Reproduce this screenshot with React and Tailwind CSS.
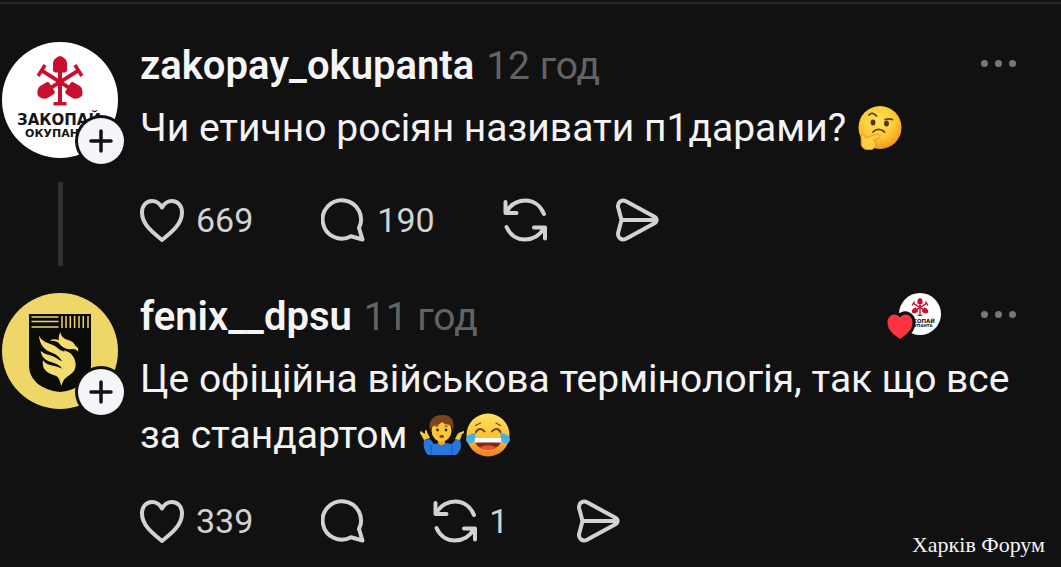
import React from 'react';
import clsx from 'clsx';

const posts = [
  {
    id: 1,
    author: 'zakopay_okupanta',
    time: '12 год',
    lines: ['Чи етично росіян називати п1дарами?'],
    emojis: ['thinking'],
    likes: 669,
    replies: 190,
    hasThread: true,
  },
  {
    id: 2,
    author: 'fenix__dpsu',
    time: '11 год',
    lines: ['Це офіційна військова термінологія, так що все', 'за стандартом'],
    emojis: ['shrug', 'joy'],
    likes: 339,
    reposts: 1,
    likedByAuthor: true,
  },
];

const Shovel = ({ angle }) => (
  <g transform={`rotate(${angle} 58 40)`} fill="#c8102e">
    <path d="M58 14c-4.500 1.500-7 4-7 8v6c0 1.500 1 2.500 2.500 2.500h9c1.500 0 2.500-1 2.500-2.500v-6c0-4-2.500-6.500-7-8z" />
    <path d="M56 29h4v32h-4z" />
    <path d="M51.500 60h13v3.500h-13z" />
  </g>
);

const ShovelLogo = ({ className }) => (
  <svg viewBox="0 0 116 116" className={className} role="img" aria-label="zakopay_okupanta">
    <circle cx="58" cy="58" r="58" fill="#fff" />
    <Shovel angle={0} />
    <Shovel angle={122} />
    <Shovel angle={238} />
    <g fill="#15151a" textAnchor="middle" fontFamily="'DejaVu Sans', sans-serif" fontWeight="700">
      <text x="57" y="83" fontSize="15">ЗАКОПАЙ</text>
      <text x="58" y="95" fontSize="11">ОКУПАНТА</text>
    </g>
  </svg>
);

const PhoenixLogo = ({ className }) => (
  <svg viewBox="0 0 116 116" className={className} role="img" aria-label="fenix__dpsu">
    <circle cx="58" cy="58" r="58" fill="#eed668" />
    <path d="M27 21h62v51c0 15-12 25-31 27-19-2-31-12-31-27z" fill="#0b0b08" />
    <g stroke="#eed668" strokeWidth="1.5">
      <path d="M29.5 24h27M29.5 28.5h27M29.5 34h27" />
      <path d="M60 23v12M64 23v12M68.3 23v12M72.6 23v12M77 23v12M81.3 23v12M86 23v12" />
    </g>
    <g transform="translate(-2 -8) scale(.3333)" fill="#f3dc72">
      <path d="M181 141c2 13 9 19 21 23 12 3 20 8 23 17l9 8 1 11c-5-6-11-8-18-8-8 2-15 1-23-3-10-4-15-12-20-17-8-5-15-5-25-5 9-5 18-5 27-1 0-9 1-17 5-25z" />
      <path d="M117 151c5 14 20 22 36 27 16 4 22 17 36 21 20 3 38 18 38 40 0 27-24 31-34 44-4 6-6 12-9 19-5-12-4-21-15-29-18-6-32-12-38-25-3-7-3-14-2-22 7 10 17 15 31 16 9 1 18 5 27 9-8-11-19-15-32-19-20-5-31-18-33-34 12 10 23 11 35 15 12 5 18 12 30 16-8-10-15-20-29-25-25-7-40-26-41-53z" />
      <path d="M190 196c16 3 29 13 33 27l-19-12z" />
    </g>
  </svg>
);

const Heart = () => (
  <svg viewBox="0 0 44 44" className="size-11" fill="none" stroke="currentColor" strokeWidth="4" strokeLinejoin="round" aria-hidden="true">
    <path d="M22 9.5C19.5 5 16 3 12 3 6 3 2 8 2 14.5 2 26 12 34 22 42c10-8 20-16 20-27.5C42 8 38 3 32 3c-4 0-7.500 2-10 6.5z" />
  </svg>
);

const Bubble = () => (
  <svg viewBox="0 0 44 44" className="size-11" fill="none" stroke="currentColor" strokeWidth="4" strokeLinejoin="round" aria-hidden="true">
    <path d="M38 30A19.2 19.2 0 1 0 30 38.300L41.5 41.5z" />
  </svg>
);

const Repost = () => (
  <svg viewBox="0 0 44 44" className="size-11" fill="none" stroke="currentColor" strokeWidth="4" strokeLinecap="round" strokeLinejoin="round" aria-hidden="true">
    <path d="M41 16C37.5 7.5 30.5 2.5 22.5 2.5 14 2.5 7 7 3 14.5M2.500 4v11h11" />
    <path d="M3.5 29C7 37 14 41.5 22 41.5S37 37 41 30M31 29.5h11v11" />
  </svg>
);

const Send = () => (
  <svg viewBox="0 0 44 44" className="size-11" fill="none" stroke="currentColor" strokeWidth="4" strokeLinejoin="round" aria-hidden="true">
    <path d="M3.2 9.5C2 4.500 6.500 1 11 3.300L39 18.500c3.500 2 3.500 5 0 7L11 40.700C6.500 43 2 39.500 3.200 34.500L6.500 22zM6.500 22h34" />
  </svg>
);

const Thinking = () => (
  <svg viewBox="0 0 44 44" className="size-11" role="img" aria-label="🤔">
    <defs>
      <radialGradient id="think" cx=".45" cy=".35" r=".65">
        <stop offset="0" stopColor="#ffe45c" />
        <stop offset=".6" stopColor="#fcc936" />
        <stop offset="1" stopColor="#ef9a20" />
      </radialGradient>
    </defs>
    <circle cx="22" cy="21.5" r="21.5" fill="url(#think)" />
    <g fill="none" stroke="#6a3c10" strokeLinecap="round" strokeWidth="1.8">
      <path d="M11 9c2-2.500 5-2 7.500 1" />
      <path d="M27 13.500c3-1 5-1 7.500 0" />
      <path d="M15 26c3-3.500 8-3.500 11.500 0" />
    </g>
    <ellipse cx="15" cy="16.5" rx="2.4" ry="3" fill="#50300f" />
    <ellipse cx="28.5" cy="17.5" rx="2.4" ry="3" fill="#50300f" />
    <path d="M3 30c2-2.500 4-1 4.500 2 4-1 10-4.500 13.500-3.500 2 .8 1.500 3-.5 3.700l-5 1.800c3 2 3 8-1.500 9.500-6 1.200-10-1-10.800-5z" fill="#ffcf3d" stroke="#e58b1c" strokeWidth=".8" />
  </svg>
);

const Shrug = () => (
  <svg viewBox="0 0 44 44" className="size-11" role="img" aria-label="🤷‍♂️">
    <path d="M8 42c-4-4-5-10-4-15l6-1 4 5 6-1h6l6 1 4-5 4 1c2 6 1 11-4 15z" fill="#2878dc" />
    <path d="M11 32v10M32 32v10" stroke="#185cb8" strokeWidth="1.2" />
    <path d="M4 27l-4-7c0-2 1-3 2-1l3 2v-3c1-2 2-1 2 1l3 6zM35 26l2-4c2-3 4-3 7-4 1 1 0 2-2 3l-2 6z" fill="#fbc83a" />
    <path d="M18 26h7v4c-2 3-5 3-7 0z" fill="#e8a52d" />
    <ellipse cx="21.5" cy="17.5" rx="10" ry="11" fill="#fcc83b" />
    <path d="M10 17C8 8 13 2 22 2c9-.5 13 5 11 15l-2-5c-4 0-7-1-9-3-3 3-6 4-9 4z" fill="#7a451f" />
    <circle cx="17.5" cy="17" r="1.4" fill="#4a2b12" />
    <circle cx="26" cy="17" r="1.4" fill="#4a2b12" />
    <path d="M15.5 13.5l3-.8M24.5 12.7l3 .8" stroke="#6a3c18" strokeWidth="1.1" />
    <ellipse cx="21.7" cy="23.5" rx="2.4" ry="1.4" fill="#8b3d1c" />
  </svg>
);

const Joy = () => (
  <svg viewBox="0 0 44 44" className="size-11" role="img" aria-label="😂">
    <defs>
      <linearGradient id="joy" x1="0" y1="0" x2="0" y2="1">
        <stop offset="0" stopColor="#ffe062" />
        <stop offset=".55" stopColor="#fbc238" />
        <stop offset="1" stopColor="#ed7f22" />
      </linearGradient>
    </defs>
    <circle cx="22" cy="22" r="21.5" fill="url(#joy)" />
    <g fill="none" stroke="#7a4312" strokeLinecap="round" strokeWidth="2">
      <path d="M10 19c2-4 6-4 8.500-.5M26 18.500c2.500-3.500 6.500-3.500 8.500.5" />
      <path d="M9.500 12.500l5-2.500M30 10l4.500 2.500" strokeWidth="1.3" />
    </g>
    <path d="M8 25h28c-.5 7-6 11.500-14 11.500S8.500 32 8 25z" fill="#7d2d14" />
    <path d="M8 25h28l-1 4.500H9z" fill="#fff" />
    <path d="M14 34.500c4-3 12-3 16 0-4 3-12 3-16 0z" fill="#e8503a" />
    <path d="M10 20C4 20 0 23 0 27c.5 4 6 4.500 8 1 1-2 1-5 2-8zM34 20c6 0 10 3 10 7-.5 4-6 4.500-8 1-1-2-1-5-2-8z" fill="#46b0e8" />
  </svg>
);

const emojiMap = { thinking: Thinking, shrug: Shrug, joy: Joy };

const Action = ({ label, count, children }) => (
  <button type="button" aria-label={label} className="flex items-center gap-3">
    {children}
    {count && <span>{count}</span>}
  </button>
);

const LikedBy = () => (
  <div className="relative size-[42px]">
    <ShovelLogo className="size-full" />
    <svg viewBox="0 0 34 34" className="absolute -bottom-2 -left-4 size-[34px]" aria-hidden="true">
      <path
        d="M17 8.500C12.500 2.500 4.500 6 4.500 13.500c0 8 7 12.500 12.500 16.500 5.500-4 12.500-8.500 12.500-16.500C29.500 6 21.500 2.500 17 8.500z"
        fill="#fb3440"
        stroke="#111"
        strokeWidth="6"
        paintOrder="stroke"
      />
    </svg>
  </div>
);

const Post = ({ post }) => (
  <article className="flex gap-[22px]">
    <div className="flex w-[116px] shrink-0 flex-col items-center">
      <div className="relative size-[116px]">
        {post.hasThread ? <ShovelLogo className="size-full" /> : <PhoenixLogo className="size-full" />}
        <button
          type="button"
          aria-label={`Стежити за ${post.author}`}
          className="absolute -right-1.5 -bottom-1.5 flex size-[46px] items-center justify-center rounded-full bg-[#f3f5f8] ring-3 ring-[#111111]"
        >
          <svg viewBox="0 0 24 24" className="size-6" stroke="#111" strokeWidth="3.5" strokeLinecap="round" aria-hidden="true">
            <path d="M12 2v20M2 12h20" />
          </svg>
        </button>
      </div>
      {post.hasThread && <div className="mt-6 h-[84px] w-[5px] bg-[#303132]" />}
    </div>

    <div className="min-w-0 flex-1">
      <header className="flex h-12 items-center pr-[45px]">
        <a href="#" className="text-[40px] font-semibold text-[#f5f5f5]">{post.author}</a>
        <time className="ml-3 text-[39px] text-[#636363]">{post.time}</time>
        <div className="ml-auto flex items-center gap-10 pb-1.5">
          {post.likedByAuthor && <LikedBy />}
          <button type="button" aria-label="Більше" className="flex gap-[7px] text-[#777777]">
            <span className="size-[7px] rounded-full bg-current" />
            <span className="size-[7px] rounded-full bg-current" />
            <span className="size-[7px] rounded-full bg-current" />
          </button>
        </div>
      </header>

      <div className="mt-2.5 text-[39px] leading-14 text-[#f3f3f3]">
        {post.lines.map((line, i) => (
          <p key={line} className="flex items-center gap-3 whitespace-nowrap">
            {line}
            {i === post.lines.length - 1 && (
              <span className="flex gap-0.5">
                {post.emojis.map((name) => {
                  const Emoji = emojiMap[name];
                  return <Emoji key={name} />;
                })}
              </span>
            )}
          </p>
        ))}
      </div>

      <footer
        className={clsx(
          'flex h-12 items-center gap-[68px] text-[34px] text-[#d2d2d2]',
          post.hasThread ? 'mt-10' : 'mt-[34px]'
        )}
      >
        <Action label="Подобається" count={post.likes}><Heart /></Action>
        <Action label="Відповісти" count={post.replies}><Bubble /></Action>
        <Action label="Поширити" count={post.reposts}><Repost /></Action>
        <Action label="Надіслати"><Send /></Action>
      </footer>
    </div>
  </article>
);

export default function App() {
  return (
    <div className="relative min-h-screen bg-[#111111] pt-0.5 font-['Roboto',sans-serif]">
      <main className="flex flex-col gap-[27px] border-t-2 border-[#292929] pt-[38px] pl-0.5">
        {posts.map((post) => (
          <Post key={post.id} post={post} />
        ))}
      </main>
      <p className="absolute right-4 bottom-1.5 font-['Liberation_Serif',serif] text-[22px] text-[#f3f3f3]">
        Харків Форум
      </p>
    </div>
  );
}
